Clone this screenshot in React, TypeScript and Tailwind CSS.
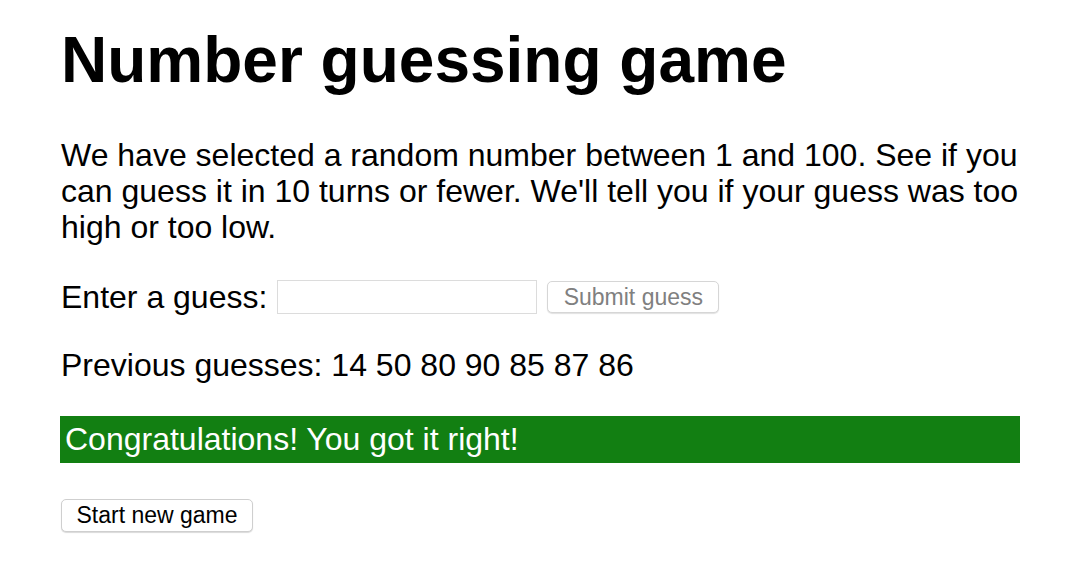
export default function App() {
  const guesses = [14, 50, 80, 90, 85, 87, 86]

  return (
    <div className="min-h-[578px] bg-white text-black font-['Liberation_Sans',Arial,sans-serif]">
      <div className="ml-[60px] w-[960px] pt-[23px]">
        <h1 className="ml-[1px] text-[64px] leading-[74px] font-bold">Number guessing game</h1>

        <p className="mt-[40px] ml-[1px] text-[32px] leading-[36px]">
          We have selected a random number between 1 and 100. See if you can guess it in 10 turns or
          fewer. We'll tell you if your guess was too high or too low.
        </p>

        <div className="mt-[34px] ml-[1px] flex items-center">
          <label htmlFor="guessField" className="text-[32px] leading-[36px]">
            Enter a guess:
          </label>
          <input
            id="guessField"
            type="text"
            className="ml-[10px] h-[34px] w-[260px] border border-[#dcdcdc] bg-white outline-none"
          />
          <button
            disabled
            className="ml-[10px] h-[32px] w-[172px] rounded-[5px] border border-[#d6d6d6] bg-white text-[23px] leading-none text-[#808080] shadow-[0_1px_1px_rgba(0,0,0,0.12)]"
          >
            Submit guess
          </button>
        </div>

        <p className="mt-[32px] ml-[1px] text-[32px] leading-[36px]">
          Previous guesses: {guesses.join(' ')}
        </p>

        <p className="mt-[33px] bg-[#127f12] pl-[5px] pt-[5px] pb-[6px] text-[32px] leading-[36px] text-white">
          Congratulations! You got it right!
        </p>

        <button className="mt-[36px] ml-[1px] h-[33px] w-[192px] rounded-[5px] border border-[#cfcfcf] bg-white text-[23px] leading-none text-black shadow-[0_1px_1px_rgba(0,0,0,0.15)]">
          Start new game
        </button>
      </div>
    </div>
  )
}
